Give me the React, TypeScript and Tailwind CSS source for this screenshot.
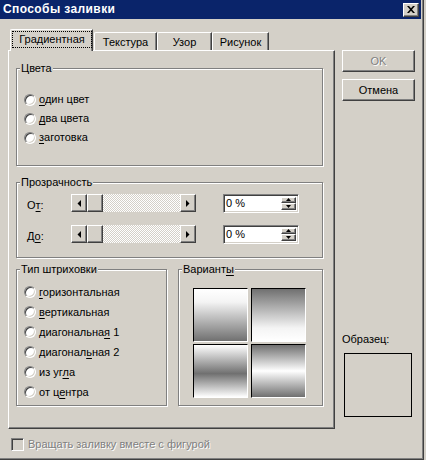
import React from 'react';

const raised =
  'border border-t-white border-l-white border-r-[#404040] border-b-[#404040] shadow-[inset_-1px_-1px_#808080]';
const sunken =
  'border border-t-[#808080] border-l-[#808080] border-r-white border-b-white shadow-[inset_1px_1px_#404040,inset_-1px_-1px_#d4d0c8]';

const U = ({ children }: { children: React.ReactNode }) => (
  <span className="underline decoration-1 underline-offset-[2px]">{children}</span>
);

const Radio = ({ children, h = 'h-[20px]' }: { children: React.ReactNode; h?: string }) => (
  <div className={`flex items-center ${h}`}>
    <span className="w-[12px] h-[12px] shrink-0 rounded-full bg-white border border-t-[#808080] border-l-[#808080] border-r-white border-b-white shadow-[inset_1px_1px_#404040,inset_-1px_-1px_#d4d0c8]" />
    <span className="ml-[3px]">{children}</span>
  </div>
);

const Group = ({
  title,
  className,
  children,
}: {
  title: React.ReactNode;
  className: string;
  children?: React.ReactNode;
}) => (
  <div className={`relative border border-[#808080] shadow-[inset_1px_1px_#fff,1px_1px_#fff] ${className}`}>
    <span className="absolute left-[3px] top-[-8px] bg-[#d4d0c8] px-[1px] leading-[14px]">{title}</span>
    {children}
  </div>
);

const Tri = ({ dir }: { dir: 'left' | 'right' | 'up' | 'down' }) => {
  if (dir === 'left')
    return (
      <svg width="4" height="7" viewBox="0 0 4 7">
        <path d="M4 0V7L0.5 3.5Z" fill="#000" />
      </svg>
    );
  if (dir === 'right')
    return (
      <svg width="4" height="7" viewBox="0 0 4 7">
        <path d="M0 0V7L3.5 3.5Z" fill="#000" />
      </svg>
    );
  if (dir === 'up')
    return (
      <svg width="5" height="3" viewBox="0 0 5 3">
        <path d="M0 3H5L2.5 0Z" fill="#000" />
      </svg>
    );
  return (
    <svg width="5" height="3" viewBox="0 0 5 3">
      <path d="M0 0H5L2.5 3Z" fill="#000" />
    </svg>
  );
};

const ScrollBar = () => (
  <div className="flex h-[18px] w-[125px]">
    <div className={`w-[16px] h-full flex items-center justify-center bg-[#d4d0c8] ${raised}`}>
      <Tri dir="left" />
    </div>
    <div className={`w-[16px] h-full bg-[#d4d0c8] ${raised}`} />
    <div className="flex-1 h-full bg-[image:repeating-conic-gradient(#d4d0c8_0_25%,#ffffff_0_50%)] bg-[length:2px_2px]" />
    <div className={`w-[16px] h-full flex items-center justify-center bg-[#d4d0c8] ${raised}`}>
      <Tri dir="right" />
    </div>
  </div>
);

const Spin = () => (
  <div className={`flex w-[76px] h-[19px] bg-white ${sunken} p-[2px]`}>
    <div className="flex-1 leading-[13px]">0 %</div>
    <div className="flex flex-col w-[15px] h-full">
      <div className={`flex-1 flex items-center justify-center bg-[#d4d0c8] ${raised}`}>
        <Tri dir="up" />
      </div>
      <div className={`flex-1 flex items-center justify-center bg-[#d4d0c8] ${raised}`}>
        <Tri dir="down" />
      </div>
    </div>
  </div>
);

const Swatch = ({ bg }: { bg: string }) => (
  <div className={`w-[55px] h-[54px] border border-t-black border-l-black border-r-white border-b-white ${bg}`} />
);

const Tab = ({ w, children }: { w: string; children: React.ReactNode }) => (
  <div
    className={`h-[18px] ${w} border-t border-l border-r border-t-white border-l-white border-r-[#404040] shadow-[inset_-1px_0_#808080] rounded-tl-[2px] flex items-center justify-center pt-[2px]`}
  >
    {children}
  </div>
);

export default function App() {
  return (
    <div className="w-[426px] h-[460px] bg-[#d4d0c8] text-[11px] text-black font-['Liberation_Sans',Arial,sans-serif] leading-[13px] select-none">
      <div className="w-[424px] h-[460px] flex flex-col border-r border-b border-r-[#404040] border-b-[#404040] shadow-[inset_-1px_-1px_#808080]">
        {/* title bar */}
        <div className="h-[19px] mr-[2px] bg-[#0a246a] flex items-center pl-[3px] pr-[2px]">
          <span className="text-white font-bold text-[12px] tracking-[0.4px]">Способы заливки</span>
          <div className="flex-1" />
          <div className={`w-[16px] h-[14px] bg-[#d4d0c8] flex items-center justify-center ${raised}`}>
            <svg width="8" height="7" viewBox="0 0 8 7">
              <path d="M0 0H2L4 2.2L6 0H8L5 3.5L8 7H6L4 4.8L2 7H0L3 3.5Z" fill="#000" />
            </svg>
          </div>
        </div>

        <div className="flex pl-[8px] pt-[10px]">
          {/* left column */}
          <div className="flex flex-col w-[327px]">
            <div className="flex items-end h-[21px] pl-[2px]">
              <div className="relative z-10 -mb-px h-[22px] w-[83px] bg-[#d4d0c8] border-t border-l border-r border-t-white border-l-white border-r-[#404040] shadow-[inset_-1px_0_#808080] rounded-tl-[2px] pt-[2px] pl-[2px]">
                <div className="w-[78px] h-[15px] outline-1 outline-dotted outline-black flex items-center justify-center">
                  Градиентная
                </div>
              </div>
              <div className="ml-[1px]">
                <Tab w="w-[63px]">Текстура</Tab>
              </div>
              <Tab w="w-[55px]">Узор</Tab>
              <Tab w="w-[57px]">Рисунок</Tab>
            </div>

            <div className={`h-[379px] ${raised} pt-[17px] pl-[7px]`}>
              <Group title="Цвета" className="w-[307px] h-[98px] pt-[21px] pl-[7px]">
                <Radio h="h-[19px]">
                  <U>о</U>дин цвет
                </Radio>
                <Radio h="h-[19px]">
                  <U>д</U>ва цвета
                </Radio>
                <Radio h="h-[19px]">
                  <U>з</U>аготовка
                </Radio>
              </Group>

              <Group title="Прозрачность" className="mt-[16px] w-[307px] h-[76px] pt-[11px] pl-[10px] flex flex-col gap-[13px]">
                <div className="flex items-center h-[18px]">
                  <span className="w-[44px] pt-[4px]">
                    О<U>т</U>:
                  </span>
                  <ScrollBar />
                  <div className="ml-[27px]">
                    <Spin />
                  </div>
                </div>
                <div className="flex items-center h-[18px]">
                  <span className="w-[44px] pt-[4px]">
                    Д<U>о</U>:
                  </span>
                  <ScrollBar />
                  <div className="ml-[27px]">
                    <Spin />
                  </div>
                </div>
              </Group>

              <div className="flex mt-[11px] gap-[11px]">
                <Group title="Тип штриховки" className="w-[151px] h-[137px] pt-[12px] pl-[7px]">
                  <Radio>
                    <U>г</U>оризонтальная
                  </Radio>
                  <Radio>
                    <U>в</U>ертикальная
                  </Radio>
                  <Radio>
                    диагональна<U>я</U> 1
                  </Radio>
                  <Radio>
                    диагонал<U>ь</U>ная 2
                  </Radio>
                  <Radio>
                    из уг<U>л</U>а
                  </Radio>
                  <Radio>
                    от ц<U>е</U>нтра
                  </Radio>
                </Group>
                <Group
                  title={
                    <>
                      Вариант<U>ы</U>
                    </>
                  }
                  className="w-[145px] h-[137px] pt-[18px] pl-[14px]"
                >
                  <div className="grid grid-cols-[55px_55px] gap-x-[3px] gap-y-[2px]">
                    <Swatch bg="bg-[linear-gradient(to_bottom,#ffffff_0%,#f4f4f4_25%,#707070_100%)]" />
                    <Swatch bg="bg-[linear-gradient(to_bottom,#707070_0%,#f4f4f4_75%,#ffffff_100%)]" />
                    <Swatch bg="bg-[linear-gradient(to_bottom,#ffffff_0%,#707070_55%,#ffffff_100%)]" />
                    <Swatch bg="bg-[linear-gradient(to_bottom,#707070_0%,#ffffff_50%,#707070_100%)]" />
                  </div>
                </Group>
              </div>
            </div>

            <div className="flex items-center mt-[9px] pl-[3px]">
              <span className="w-[13px] h-[13px] bg-[#d4d0c8] border border-t-[#808080] border-l-[#808080] border-r-white border-b-white shadow-[inset_1px_1px_#404040,inset_-1px_-1px_#d4d0c8]" />
              <span className="ml-[4px] text-[#808080] [text-shadow:1px_1px_#ffffff]">
                Вращать заливку вместе с фигурой
              </span>
            </div>
          </div>

          {/* right column */}
          <div className="flex flex-col ml-[7px] pt-[21px]">
            <div className={`w-[73px] h-[22px] flex items-center justify-center text-[#808080] [text-shadow:1px_1px_#ffffff] ${raised}`}>
              OK
            </div>
            <div className={`mt-[7px] w-[73px] h-[22px] flex items-center justify-center ${raised}`}>Отмена</div>
            <div className="mt-[231px] h-[14px] leading-[14px]">Образец:</div>
            <div className="mt-[7px] ml-[2px] w-[68px] h-[64px] border border-black" />
          </div>
        </div>
      </div>
    </div>
  );
}
